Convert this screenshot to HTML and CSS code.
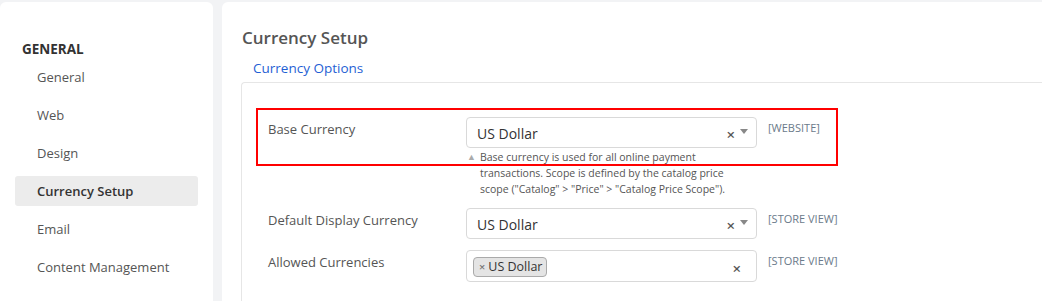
FILE: index.html
```html
<!DOCTYPE html>
<html>
<head>
<meta charset="utf-8">
<link rel="stylesheet" href="styles.css">
</head>
<body>
<div class="page">
  <aside class="sidebar">
    <div class="group-title">GENERAL</div>
    <ul class="menu">
      <li class="menu-item">General</li>
      <li class="menu-item">Web</li>
      <li class="menu-item">Design</li>
      <li class="menu-item active">Currency Setup</li>
      <li class="menu-item">Email</li>
      <li class="menu-item">Content Management</li>
    </ul>
  </aside>
  <main class="main">
    <h1 class="title">Currency Setup</h1>
    <div class="section-title">Currency Options</div>
    <div class="fieldset">
      <div class="row highlighted">
        <div class="highlight"></div>
        <label class="label">Base Currency</label>
        <div class="control">
          <div class="select">
            <span class="value">US Dollar</span>
            <span class="clear">×</span>
            <span class="arrow"></span>
          </div>
          <div class="hint"><span class="tri">▲</span>Base currency is used for all online payment transactions. Scope is defined by the catalog price scope ("Catalog" &gt; "Price" &gt; "Catalog Price Scope").</div>
        </div>
        <div class="scope">[WEBSITE]</div>
      </div>
      <div class="row">
        <label class="label">Default Display Currency</label>
        <div class="control">
          <div class="select">
            <span class="value">US Dollar</span>
            <span class="clear">×</span>
            <span class="arrow"></span>
          </div>
        </div>
        <div class="scope">[STORE VIEW]</div>
      </div>
      <div class="row">
        <label class="label">Allowed Currencies</label>
        <div class="control">
          <div class="select multi">
            <span class="chip"><span class="chip-x">×</span>US Dollar</span>
            <span class="clear multi-clear">×</span>
          </div>
        </div>
        <div class="scope">[STORE VIEW]</div>
      </div>
    </div>
  </main>
</div>
</body>
</html>
```

FILE: styles.css
```css
* { box-sizing: border-box; }
html, body {
  margin: 0;
  padding: 0;
  background: #f2f3f5;
  font-family: "Open Sans", "Noto Sans", sans-serif;
  color: #555;
  overflow: hidden;
}
.page {
  display: flex;
  gap: 9px;
  padding-top: 2px;
  height: 301px;
}
.sidebar {
  width: 213px;
  flex: none;
  background: #fff;
  border-radius: 6px 6px 0 0;
  padding: 39px 15px 0 15px;
}
.group-title {
  font-size: 13.5px;
  font-weight: 700;
  color: #333;
  padding-left: 7px;
  line-height: 16px;
  margin-bottom: 5px;
}
.menu {
  list-style: none;
  margin: 0;
  padding: 0;
  display: flex;
  flex-direction: column;
  gap: 8px;
}
.menu-item {
  height: 30px;
  line-height: 30px;
  padding-left: 22px;
  font-size: 13px;
  color: #555;
  border-radius: 3px;
}
.menu-item.active {
  background: #ececec;
  color: #333;
  font-weight: 600;
}
.main {
  flex: 1;
  background: #fff;
  border-radius: 6px 0 0 0;
  padding: 24px 0 0 20px;
}
.title {
  margin: 0;
  font-size: 17px;
  font-weight: 600;
  color: #555;
  line-height: 24px;
}
.section-title {
  margin-top: 9px;
  padding-left: 11px;
  font-size: 13.5px;
  color: #1f5fd4;
  line-height: 18px;
}
.fieldset {
  margin-top: 5px;
  margin-left: -1px;
  border: 1px solid #e6e6e6;
  border-right: none;
  border-bottom: none;
  border-radius: 4px 0 0 0;
  padding: 34px 0 0 26px;
  display: flex;
  flex-direction: column;
  gap: 11px;
  height: 230px;
}
.row {
  display: grid;
  grid-template-columns: 187px 291px auto;
  column-gap: 11px;
  position: relative;
}
.highlight {
  position: absolute;
  left: -12px;
  top: -9px;
  width: 582px;
  height: 58px;
  border: 2px solid #f00;
  pointer-events: none;
}
.label {
  font-size: 13px;
  color: #555;
  line-height: 18px;
  padding-top: 3px;
}
.select {
  height: 31px;
  border: 1px solid #d9d9d9;
  border-radius: 4px;
  display: flex;
  align-items: center;
  padding: 0 8px 0 10px;
  position: relative;
}
.value {
  flex: 1;
  font-size: 14px;
  color: #333;
  padding-top: 2px;
}
.clear {
  font-size: 15px;
  color: #555;
  font-weight: 600;
  line-height: 1;
  margin-right: 5px;
  margin-top: 4px;
}
.arrow {
  width: 0;
  height: 0;
  border-left: 4px solid transparent;
  border-right: 4px solid transparent;
  border-top: 5px solid #888;
  margin-top: -2px;
}
.select.multi {
  height: 32px;
  padding-left: 6px;
}
.chip {
  display: inline-flex;
  align-items: center;
  height: 20px;
  padding: 0 4px 0 5px;
  background: #e4e4e4;
  border: 1px solid #aaa;
  border-radius: 4px;
  font-size: 12.5px;
  color: #333;
  margin-top: 1px;
}
.chip-x {
  font-size: 11px;
  color: #777;
  margin-right: 3px;
  font-weight: 600;
}
.multi-clear {
  margin-left: auto;
  margin-right: 7px;
}
.hint {
  font-size: 10.5px;
  color: #555;
  line-height: 16px;
  padding-left: 14px;
  padding-right: 20px;
  margin-top: 1px;
  position: relative;
}
.tri {
  position: absolute;
  left: 1px;
  top: 0;
  font-size: 9px;
  color: #aaa;
}
.scope {
  font-size: 11px;
  color: #6b7a8a;
  padding-top: 3px;
}
```
